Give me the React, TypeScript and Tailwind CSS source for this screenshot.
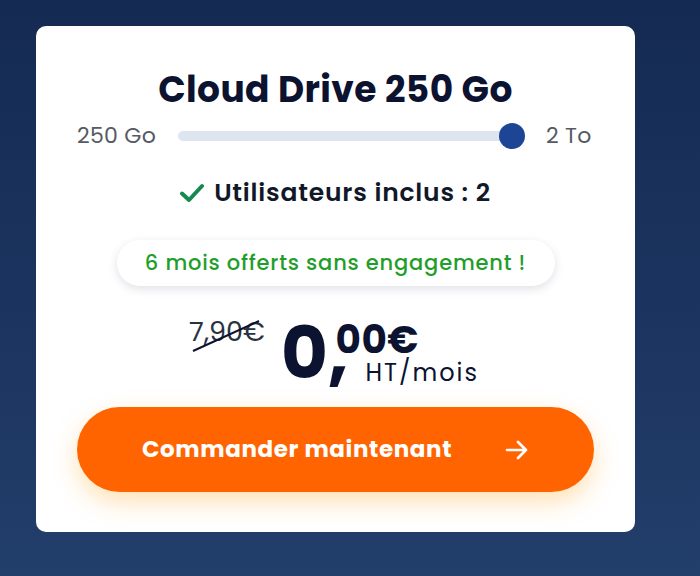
import React from "react";

const font = { fontFamily: "Poppins, Inter, 'Noto Sans', sans-serif" };

const Slider = () => {
  return (
    <div className="flex items-center w-full mt-[15px]">
      <span className="text-[22px] text-[#555a63] leading-none w-[101px] tracking-[0.3px]">250 Go</span>
      <div className="relative flex-1 h-[10px] rounded-full bg-[#dde5f0]">
        <div className="absolute right-[-1px] top-1/2 -translate-y-1/2 w-[26px] h-[26px] rounded-full bg-[#1d4595]" />
      </div>
      <span className="text-[22px] text-[#555a63] leading-none pl-[22px] w-[70px] tracking-[0.3px]">2 To</span>
    </div>
  );
};

export default function App() {
  return (
    <div
      className="w-[700px] h-[576px] bg-gradient-to-b from-[#142a53] to-[#223e6a] pt-[26px] pl-[36px]"
      style={font}
    >
      <div className="w-[599px] h-[506px] bg-white rounded-[10px] px-[41px] pt-[44px] flex flex-col items-center">
        <h1 className="text-[36px] font-bold text-[#0b1330] leading-[40px] tracking-[0.4px]">
          Cloud Drive 250 Go
        </h1>
        <Slider />
        <div className="flex items-center gap-[10px] mt-[33px] text-[25px] font-semibold text-[#111827] leading-none tracking-[0.8px]">
          <svg width="24" height="20" viewBox="0 0 24 20">
            <path d="M2 10.5 L9 17 L22 3" fill="none" stroke="#168a4e" strokeWidth="4" strokeLinecap="round" strokeLinejoin="round" />
          </svg>
          <span>Utilisateurs inclus : 2</span>
        </div>
        <div className="mt-[35px] w-[438px] h-[46px] rounded-full bg-white shadow-[0_3px_10px_rgba(30,40,80,0.14)] flex items-center justify-center text-[21px] font-medium text-[#1f9e2a] tracking-[0.8px]">
          6 mois offerts sans engagement !
        </div>
        <div className="flex items-start mt-[32px] h-[70px] ml-[-3px]">
          <div className="relative text-[27px] text-[#2a3242] leading-none mr-[16px]">
            7,90€
            <svg className="absolute left-0 top-0" width="74" height="36" viewBox="0 0 74 36">
              <line x1="4" y1="33" x2="70" y2="3" stroke="#0b1330" strokeWidth="2" />
            </svg>
          </div>
          <div className="text-[72px] font-bold text-[#0b1330] leading-[70px]">0,</div>
          <div className="flex flex-col ml-[-13px]">
            <span className="text-[39px] font-bold text-[#0b1330] leading-[38px] mt-[3px] tracking-[0.5px]">00€</span>
            <span className="text-[24px] text-[#0b1330] leading-none ml-[30px] mt-[2px] tracking-[2px]">HT/mois</span>
          </div>
        </div>
        <button className="mt-[19px] w-full h-[85px] rounded-full bg-[#ff6400] shadow-[0_10px_24px_rgba(255,170,40,0.35)] flex items-center justify-center gap-[53px] text-white text-[23px] font-bold tracking-[0.6px]">
          <span>Commander maintenant</span>
          <svg width="24" height="20" viewBox="0 0 24 20">
            <path d="M2 10 H21 M13 2 L21 10 L13 18" fill="none" stroke="white" strokeWidth="2.6" strokeLinecap="round" strokeLinejoin="round" />
          </svg>
        </button>
      </div>
    </div>
  );
}
